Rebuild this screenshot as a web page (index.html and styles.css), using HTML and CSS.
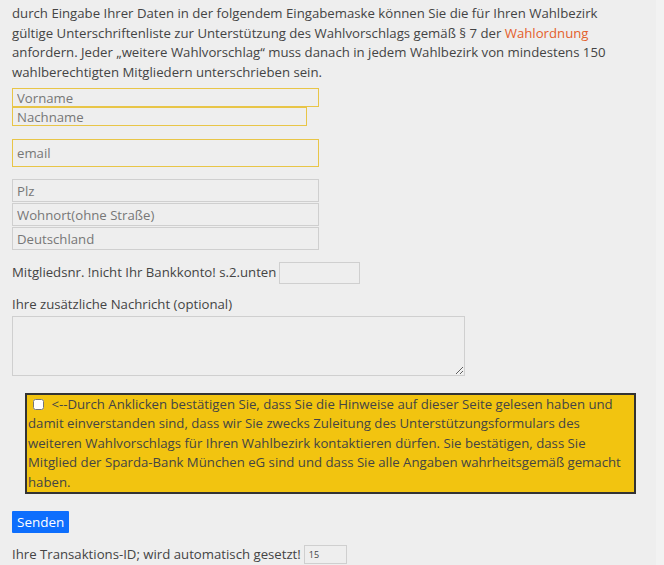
FILE: index.html
```html
<!DOCTYPE html>
<html lang="de">
<head>
<meta charset="utf-8">
<link rel="stylesheet" href="styles.css">
</head>
<body>
<div class="page">
  <p class="intro">durch Eingabe Ihrer Daten in der folgendem Eingabemaske können Sie die für Ihren Wahlbezirk gültige Unterschriftenliste zur Unterstützung des Wahlvorschlags gemäß § 7 der <a href="#" class="link">Wahlordnung</a> anfordern. Jeder „weitere Wahlvorschlag“ muss danach in jedem Wahlbezirk von mindestens 150 wahlberechtigten Mitgliedern unterschrieben sein.</p>
  <form class="form">
    <input class="field field-yellow field-vorname" type="text" placeholder="Vorname">
    <input class="field field-yellow field-nachname" type="text" placeholder="Nachname">
    <input class="field field-yellow field-email" type="text" placeholder="email">
    <div class="addr">
      <input class="field field-gray" type="text" placeholder="Plz">
      <input class="field field-gray" type="text" placeholder="Wohnort(ohne Straße)">
      <input class="field field-gray" type="text" placeholder="Deutschland">
    </div>
    <div class="member">Mitgliedsnr. !nicht Ihr Bankkonto! s.2.unten <input class="field-small" type="text"></div>
    <div class="msg-label">Ihre zusätzliche Nachricht (optional)</div>
    <textarea class="msg"></textarea>
    <div class="consent"><input class="check" type="checkbox"> &lt;--Durch Anklicken bestätigen Sie, dass Sie die Hinweise auf dieser Seite gelesen haben und damit einverstanden sind, dass wir Sie zwecks Zuleitung des Unterstützungsformulars des weiteren Wahlvorschlags für Ihren Wahlbezirk kontaktieren dürfen. Sie bestätigen, dass Sie Mitglied der Sparda-Bank München eG sind und dass Sie alle Angaben wahrheitsgemäß gemacht haben.</div>
    <button class="send" type="button">Senden</button>
    <div class="trans">Ihre Transaktions-ID; wird automatisch gesetzt! <input class="field-id" type="text" value="15"></div>
  </form>
</div>
</body>
</html>
```
FILE: styles.css
```css
html, body {
  margin: 0;
  padding: 0;
  background: #f2f2f2;
}
body {
  font-family: "Open Sans", "DejaVu Sans", sans-serif;
  font-size: 13.2px;
  line-height: 19.5px;
  color: #444;
}
.page {
  width: 656px;
  min-height: 565px;
  background: #eeeeee;
  padding: 4px 0 0 12px;
  box-sizing: border-box;
}
.intro {
  margin: 0 0 6px 0;
  width: 620px;
}
.link {
  color: #e4602c;
  text-decoration: none;
}
.form {
  display: flex;
  flex-direction: column;
  align-items: flex-start;
}
.field {
  font-family: "Open Sans", "DejaVu Sans", sans-serif;
  font-size: 13.2px;
  color: #444;
  background: #eeeeee;
  box-sizing: border-box;
  margin: 0;
  padding: 0 4px;
  outline: none;
}
.field::placeholder {
  color: #777;
}
.field-yellow {
  border: 1px solid #e8c547;
}
.field-vorname {
  width: 307px;
  height: 19px;
}
.field-nachname {
  width: 295px;
  height: 19px;
}
.field-email {
  width: 307px;
  height: 28px;
  margin-top: 13px;
}
.addr {
  display: flex;
  flex-direction: column;
  margin-top: 12px;
}
.field-gray {
  border: 1px solid #cfcfcf;
  width: 307px;
  height: 23px;
  margin-bottom: 1px;
}
.member {
  margin-top: 11px;
  display: flex;
  align-items: center;
  gap: 3px;
}
.field-small {
  width: 81px;
  height: 22px;
  box-sizing: border-box;
  border: 1px solid #cfcfcf;
  background: #eeeeee;
  margin: 0;
}
.msg-label {
  margin-top: 11px;
}
.msg {
  width: 453px;
  height: 60px;
  box-sizing: border-box;
  border: 1px solid #cfcfcf;
  background: #eeeeee;
  margin: 1px 0 0 0;
  resize: vertical;
  display: block;
}
.consent {
  margin: 17px 0 0 13px;
  width: 611px;
  box-sizing: border-box;
  border: 2px solid #333;
  background: #f2c410;
  padding: 0 12px 0 1px;
  color: #444;
}
.check {
  width: 11px;
  height: 11px;
  margin: 0 4px 0 5px;
  vertical-align: -1px;
}
.send {
  margin-top: 17px;
  background: #0d6efd;
  color: #fff;
  border: none;
  border-radius: 1px;
  font-family: "Open Sans", "DejaVu Sans", sans-serif;
  font-size: 13.5px;
  height: 22px;
  padding: 0 5px;
  line-height: 22px;
}
.trans {
  margin-top: 12px;
  display: flex;
  align-items: center;
  gap: 3px;
}
.field-id {
  width: 43px;
  height: 19px;
  box-sizing: border-box;
  border: 1px solid #cfcfcf;
  background: #eeeeee;
  font-family: "Open Sans", "DejaVu Sans", sans-serif;
  font-size: 9px;
  color: #444;
  padding: 0 4px;
  margin: 0;
}
```
